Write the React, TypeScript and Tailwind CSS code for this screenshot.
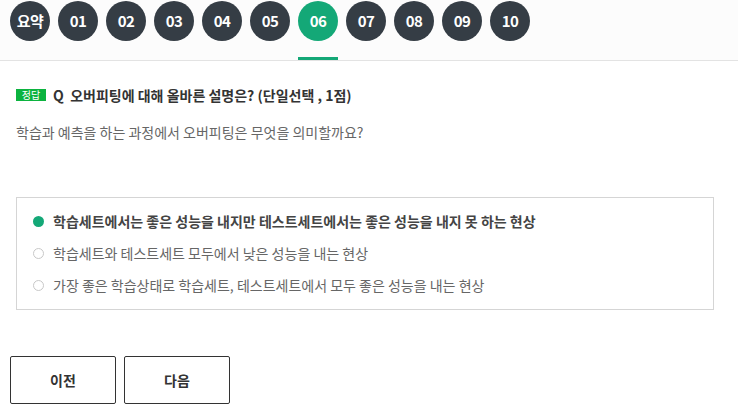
import React from 'react';

const tabs = ['요약', '01', '02', '03', '04', '05', '06', '07', '08', '09', '10'];

const options = [
  '학습세트에서는 좋은 성능을 내지만 테스트세트에서는 좋은 성능을 내지 못 하는 현상',
  '학습세트와 테스트세트 모두에서 낮은 성능을 내는 현상',
  '가장 좋은 학습상태로 학습세트, 테스트세트에서 모두 좋은 성능을 내는 현상',
];

const App = () => {
  const active = 6;
  const selected = 0;

  return (
    <div
      className="min-h-screen w-[738px] bg-white text-[#333]"
      style={{ fontFamily: '"Noto Sans CJK KR", "Noto Sans", sans-serif' }}
    >
      {/* question number tabs */}
      <div className="h-[61px] bg-[#fcfcfc] border-b border-[#e3e3e3] flex gap-2 pl-[10px] pt-px">
        {tabs.map((t, i) => (
          <div key={t} className="flex flex-col items-center w-10">
            <div
              className={`w-10 h-10 rounded-full flex items-center justify-center text-white text-[15px] font-bold tracking-[-0.5px] ${
                i === active ? 'bg-[#14a877]' : 'bg-[#353d45]'
              }`}
            >
              {t}
            </div>
            {i === active && <div className="mt-4 h-[3px] w-10 bg-[#14a877]" />}
          </div>
        ))}
      </div>

      <div className="px-4">
        {/* question title */}
        <div className="mt-[24px] flex items-center h-[20px]">
          <span className="w-[30px] h-[12px] bg-[#0cb33f] text-white text-[10px] leading-[12px] flex items-center justify-center">
            정답
          </span>
          <span className="ml-[7px] text-[14px] font-bold text-[#333]">
            Q&nbsp;&nbsp;오버피팅에 대해 올바른 설명은? (단일선택 , 1점)
          </span>
        </div>

        <p className="mt-[17px] text-[14px] text-[#666] leading-[20px]">
          학습과 예측을 하는 과정에서 오버피팅은 무엇을 의미할까요?
        </p>

        {/* options */}
        <div className="mt-[55px] w-[698px] h-[113px] border border-[#d5d5d5] pt-[13px] pl-4 flex flex-col gap-[12px]">
          {options.map((o, i) => (
            <div key={i} className="flex items-center h-[20px]">
              {i === selected ? (
                <span className="w-[11px] h-[11px] rounded-full bg-[#14a877]" />
              ) : (
                <span className="w-[11px] h-[11px] rounded-full border border-[#c8c8c8] bg-white" />
              )}
              <span
                className={`ml-[9px] text-[14px] ${
                  i === selected ? 'font-bold text-[#444]' : 'text-[#666]'
                }`}
              >
                {o}
              </span>
            </div>
          ))}
        </div>
      </div>

      {/* navigation buttons */}
      <div className="mt-[46px] pl-[10px] flex gap-2">
        <button className="w-[106px] h-[48px] border border-[#333] rounded-[2px] bg-white text-[14px] font-bold text-[#333]">
          이전
        </button>
        <button className="w-[106px] h-[48px] border border-[#333] rounded-[2px] bg-white text-[14px] font-bold text-[#333]">
          다음
        </button>
      </div>
    </div>
  );
};

export default App;
